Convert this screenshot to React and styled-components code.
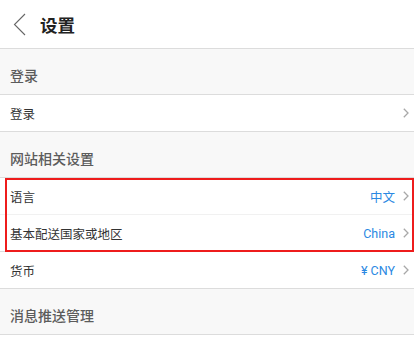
import React from "react";
import styled, { createGlobalStyle } from "styled-components";

const Global = createGlobalStyle`
  html, body { margin: 0; padding: 0; background: #fff; }
  body { font-family: Roboto, "Noto Sans CJK SC", "Noto Sans", sans-serif; -webkit-font-smoothing: antialiased; }
  * { box-sizing: border-box; }
`;

const Page = styled.div`
  width: 414px;
  background: #fff;
`;

const Header = styled.header`
  height: 49px;
  display: flex;
  align-items: center;
  border-bottom: 1px solid #dcdcdc;
  padding-left: 12px;
  gap: 14px;
`;

const BackBtn = styled.button`
  border: 0;
  background: none;
  padding: 0;
  width: 14px;
  height: 24px;
  display: flex;
  align-items: center;
  justify-content: center;
  cursor: pointer;
`;

const Title = styled.h1`
  margin: 0;
  font-size: 17.5px;
  font-weight: 700;
  color: #222;
  font-family: "Noto Sans CJK SC", sans-serif;
`;

const SectionHeader = styled.div`
  height: 46px;
  background: #f8f8f8;
  border-bottom: 1px solid #dcdcdc;
  display: flex;
  align-items: flex-end;
  padding: 0 10px 9px;
  font-family: "Noto Sans CJK SC", sans-serif;
  font-size: 14px;
  font-weight: 500;
  color: #5c5c5c;
`;

const Row = styled.div`
  height: ${(p) => (p.$last ? 36 : 37)}px;
  display: flex;
  align-items: center;
  padding: 0 5px 0 10px;
  border-bottom: 1px solid ${(p) => (p.$light ? "#f1f1f1" : "#dcdcdc")};
  ${(p) => (p.$last ? "border-bottom: none;" : "")}
  background: #fff;
`;

const Label = styled.span`
  flex: 1;
  font-family: "Noto Sans CJK SC", sans-serif;
  font-size: 12.5px;
  color: #333;
`;

const Value = styled.span`
  font-family: Roboto, "Noto Sans CJK SC", sans-serif;
  font-size: 12.5px;
  color: #2a88e2;
  margin-right: 8px;
`;

const Highlight = styled.div`
  position: relative;
  border-bottom: 1px solid #dcdcdc;
  &::after {
    content: "";
    position: absolute;
    left: 5px;
    right: 0;
    top: 0;
    bottom: -1px;
    border: 2px solid #ee1c1c;
    pointer-events: none;
  }
`;

const Chevron = () => (
  <svg width="6" height="10" viewBox="0 0 6 10">
    <polyline points="0.8,0.8 5,5 0.8,9.2" fill="none" stroke="#a8a8a8" strokeWidth="1.3" />
  </svg>
);

const Back = () => (
  <svg width="13" height="23" viewBox="0 0 13 23">
    <polyline points="12,1 1.5,11.5 12,22" fill="none" stroke="#666" strokeWidth="1.1" />
  </svg>
);

function Item({ label, value, light, last, chevron = true }) {
  return (
    <Row $light={light} $last={last}>
      <Label>{label}</Label>
      {value && <Value>{value}</Value>}
      {chevron && <Chevron />}
    </Row>
  );
}

export default function App() {
  return (
    <>
      <Global />
      <Page>
        <Header>
          <BackBtn aria-label="返回">
            <Back />
          </BackBtn>
          <Title>设置</Title>
        </Header>
        <SectionHeader>登录</SectionHeader>
        <Item label="登录" />
        <SectionHeader>网站相关设置</SectionHeader>
        <Highlight>
          <Item label="语言" value="中文" light />
          <Item label="基本配送国家或地区" value="China" last />
        </Highlight>
        <Item label="货币" value="¥ CNY" />
        <SectionHeader>消息推送管理</SectionHeader>
      </Page>
    </>
  );
}
